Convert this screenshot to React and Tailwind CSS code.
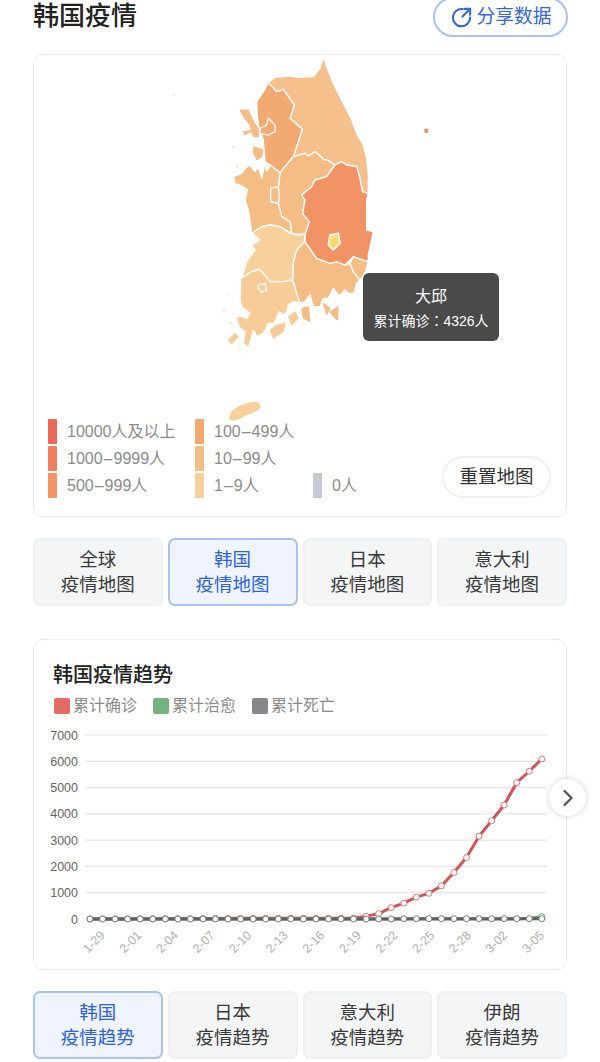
import React from 'react'
import { ChevronRight } from 'lucide-react'

const confirmed = [4, 4, 4, 4, 11, 12, 15, 15, 16, 19, 23, 24, 24, 25, 27, 28, 28, 28, 28, 28, 29, 31, 104, 204, 433, 602, 833, 977, 1261, 1766, 2337, 3150, 3736, 4335, 5186, 5621, 6088]
const cured = confirmed.map((_, i) => (i === 36 ? 90 : i === 35 ? 30 : 0))
const dead = confirmed.map((_, i) => (i > 24 ? 12 : 0))
const xLabels = ['1-29', '2-01', '2-04', '2-07', '2-10', '2-13', '2-16', '2-19', '2-22', '2-25', '2-28', '3-02', '3-05']
const yTicks = [7000, 6000, 5000, 4000, 3000, 2000, 1000, 0]

const px = (i) => 90 + i * 12.55
const py = (v) => 918 - v * (184 / 7000)
const toLine = (arr) => arr.map((v, i) => `${px(i)},${py(v)}`).join(' ')

const regions = [
  // gangwon
  { fill: '#f5c08c', d: 'M370,50 L380,80 L400,130 L420,170 L453,235 L470,280 L490,315 L500,355 L505,400 L505,460 L487,455 L480,415 L470,380 L440,375 L425,365 L405,375 L385,362 L370,358 L358,345 L345,335 L325,348 L315,340 L280,350 L307,268 L270,235 L283,195 L265,170 L250,148 L230,155 L205,128 L225,112 L265,108 L295,112 L340,110 L360,85Z' },
  // gyeonggi
  { fill: '#f2aa72', d: 'M205,128 L230,155 L250,148 L265,170 L283,195 L270,235 L307,268 L280,350 L240,398 L210,375 L195,365 L190,300 L175,255 L172,225 L170,185 L190,155Z' },
  // seoul
  { fill: '#f2aa72', d: 'M205,235 L225,255 L225,275 L205,285 L180,280 L180,265 L200,255Z' },
  // chungbuk
  { fill: '#f5bd86', d: 'M280,350 L315,340 L325,348 L345,335 L358,345 L370,358 L385,362 L405,375 L380,410 L345,420 L335,440 L305,465 L315,480 L308,520 L328,545 L315,585 L275,580 L270,545 L245,530 L235,490 L212,485 L212,445 L235,440 L240,398Z' },
  // chungnam
  { fill: '#f5bd86', d: 'M195,368 L200,395 L210,375 L240,398 L235,440 L212,445 L212,485 L235,490 L245,530 L270,545 L275,580 L240,560 L210,555 L185,560 L155,580 L150,540 L145,510 L135,480 L142,450 L130,440 L105,430 L100,410 L125,400 L135,385 L150,375 L165,395 L175,380 L185,415Z' },
  // daejeon / sejong
  { fill: '#f5bd86', d: 'M212,445 L235,440 L238,470 L235,490 L212,485Z' },
  // jeonbuk
  { fill: '#f8d09c', d: 'M155,580 L185,560 L210,555 L240,560 L270,580 L300,585 L315,580 L315,605 L290,630 L280,670 L278,720 L250,725 L210,725 L180,688 L155,695 L125,715 L140,665 L165,630 L155,615 L180,600Z' },
  // jeonnam
  { fill: '#f7cc97', d: 'M122,715 L155,695 L180,688 L210,725 L250,725 L278,720 L300,790 L282,785 L265,795 L262,815 L250,825 L238,815 L222,850 L205,850 L190,880 L170,890 L160,870 L145,925 L130,910 L135,875 L118,862 L110,840 L110,825 L140,835 L150,820 L125,800 L120,780Z' },
  // gwangju
  { fill: '#f7cc97', d: 'M175,735 L195,730 L200,750 L185,757 L175,745Z' },
  // gyeongnam
  { fill: '#f5bd86', d: 'M315,605 L350,655 L390,670 L410,665 L435,675 L450,670 L460,695 L480,720 L470,730 L462,760 L445,760 L435,750 L418,768 L400,745 L385,775 L370,775 L360,800 L340,800 L330,765 L315,785 L300,790 L278,720 L280,670 L290,630Z' },
  // ulsan / busan
  { fill: '#f5bd86', d: 'M450,670 L460,650 L505,665 L495,700 L480,720 L460,695Z' },
  // gyeongbuk
  { fill: '#f19364', d: 'M405,375 L425,365 L440,375 L470,380 L480,415 L487,455 L505,460 L500,480 L500,570 L520,575 L505,645 L505,665 L460,650 L435,675 L410,665 L390,670 L350,655 L315,605 L315,585 L328,545 L308,520 L315,480 L305,465 L335,440 L345,420 L380,410Z' },
]

const islands = [
  { fill: '#f5bd86', d: 'M120,210 L145,210 L160,245 L175,265 L175,290 L160,290 L150,255 L130,230Z' },
  { fill: '#f5bd86', d: 'M130,275 L160,270 L135,285Z' },
  { fill: '#f5bd86', d: 'M160,320 L190,330 L185,350 L170,360 L160,335Z' },
  { fill: '#f7cc97', d: 'M85,900 L105,880 L115,890 L95,912Z' },
  { fill: '#f7cc97', d: 'M210,870 L230,855 L255,850 L250,875 L220,895Z' },
  { fill: '#f7cc97', d: 'M265,830 L285,815 L295,835 L275,855Z' },
  { fill: '#f5bd86', d: 'M305,805 L325,800 L330,845 L310,835Z' },
  { fill: '#f5bd86', d: 'M370,790 L390,805 L380,825Z' },
  { fill: '#f5bd86', d: 'M390,815 L415,800 L412,840 L400,830Z' },
  { fill: '#ee8a5c', d: 'M674,268 L682,267 L682,277 L676,278Z' },
]

const specks = [[100, 322, 3], [112, 380, 3], [85, 765, 2], [100, 775, 2], [72, 810, 3], [62, 835, 2], [92, 850, 3], [135, 950, 2], [118, 925, 2], [250, 895, 2], [295, 820, 2]]

function KoreaMap() {
  return (
    <svg viewBox="-498 45 1596 1092" className="block w-[532px] h-[364px] overflow-visible">
      <circle cx="-80" cy="165" r="3" fill="#e6e6e6" />
      {islands.map((r, i) => (
        <path key={i} d={r.d} fill={r.fill} stroke={r.fill} strokeWidth="3" strokeLinejoin="round" />
      ))}
      {/* jeju */}
      <path d="M88,1134 C88,1112 110,1100 135,1092 C155,1084 180,1080 181,1098 C182,1114 150,1120 130,1130 C112,1140 92,1148 88,1134Z" fill="#f8d09c" />
      {specks.map(([x, y, r], i) => (
        <circle key={i} cx={x} cy={y} r={r} fill="#f8d9b4" />
      ))}
      {regions.map((r, i) => (
        <path key={i} d={r.d} fill={r.fill} stroke="#fff" strokeWidth="4" strokeLinejoin="round" />
      ))}
      <path d="M390,585 L415,580 L420,610 L400,630 L385,615Z" fill="#fadc6f" stroke="#fff" strokeWidth="5" strokeLinejoin="round" />
    </svg>
  )
}

function LegendItem({ color, from, to }) {
  return (
    <div className="flex items-center gap-[10px] h-[25px]">
      <span className={`block w-[9px] h-full rounded-[1px] ${color}`} />
      <span className="text-[16px] text-[#8b8b8b]">
        {from}
        {to && <span className="mx-[1px]">–</span>}
        {to}
      </span>
    </div>
  )
}

function TabRow({ items }) {
  return (
    <div className="grid grid-cols-4 gap-[5px] mx-[33px]">
      {items.map((t) => (
        <button
          key={t.top}
          className={
            t.active
              ? 'h-[68px] rounded-[7px] border-2 border-[#a9c3f1] bg-[#eff4fe] text-[#2d63d8] text-[18.5px] leading-[25px]'
              : 'h-[68px] rounded-[7px] border-2 border-[#eef0f2] bg-[#f4f5f7] text-[#3a3a3a] text-[18.5px] leading-[25px]'
          }
        >
          <div>{t.top}</div>
          <div>{t.bottom}</div>
        </button>
      ))}
    </div>
  )
}

function TrendChart() {
  return (
    <svg viewBox="34 720 532 240" className="block w-[532px] h-[240px]">
      {yTicks.map((t) => (
        <g key={t}>
          <line x1="85" x2="547" y1={py(t)} y2={py(t)} stroke="#e6e6e6" strokeWidth="1.2" />
          <text x="78" y={py(t) + 4.5} textAnchor="end" fontSize="12.5" fill="#666">{t}</text>
        </g>
      ))}
      {xLabels.map((l, i) => {
        const x = 94 + i * 36.6
        return (
          <text key={l} x={x} y="945" textAnchor="middle" fontSize="12.5" fill="#b0b0b0" transform={`rotate(-45 ${x} 941)`}>{l}</text>
        )
      })}
      <polyline points={toLine(confirmed)} fill="none" stroke="#cf5559" strokeWidth="3" strokeLinejoin="round" />
      {confirmed.map((v, i) => (
        <circle key={i} cx={px(i)} cy={py(v)} r="3" fill="#fff" stroke="#d9777a" strokeWidth="1" />
      ))}
      <polyline points={toLine(cured)} fill="none" stroke="#5fa777" strokeWidth="3" />
      <circle cx={px(36)} cy={py(90)} r="3" fill="#fff" stroke="#5fa777" strokeWidth="1" />
      <polyline points={toLine(dead)} fill="none" stroke="#5f6062" strokeWidth="3" />
      {dead.map((v, i) => (
        <circle key={i} cx={px(i)} cy={py(v)} r="3" fill="#fff" stroke="#77787a" strokeWidth="1" />
      ))}
    </svg>
  )
}

export default function App() {
  return (
    <div className="w-[600px] h-[1062px] overflow-hidden bg-white font-['Liberation_Sans','Noto_Sans_CJK_SC',sans-serif]">
      <div className="flex items-center justify-between h-[40px] mt-[-3px] ml-[33px] mr-[32px]">
        <h1 className="text-[26px] mt-[-2px] font-medium text-[#222222]">韩国疫情</h1>
        <button className="flex items-center justify-center gap-[4px] w-[135px] h-[40px] rounded-full border-2 border-[#a9c3f1] text-[#3568d6] text-[18.75px]">
          <svg width="23" height="23" viewBox="0 0 24 24" fill="none" stroke="currentColor" strokeWidth="2.2" strokeLinecap="round" strokeLinejoin="round">
            <path d="M13 3.2A9 9 0 1 0 21 12" />
            <path d="M15 3h6v6" />
            <path d="M21 3l-8 8" />
          </svg>
          分享数据
        </button>
      </div>

      <div className="relative mt-[17px] mx-[33px] h-[463px] rounded-[10px] border border-[#ebebeb]">
        <KoreaMap />
        <div className="absolute left-[329px] top-[218px] w-[136px] h-[68px] rounded-[6px] bg-[#4a4a4a] text-center text-white">
          <div className="mt-[12px] text-[16px] leading-[24px]">大邱</div>
          <div className="text-[14px] leading-[22px]">
            累计确诊<span className="font-['Noto_Sans_CJK_TC',sans-serif]">：</span>4326人
          </div>
        </div>
        <div className="flex items-end pl-[14px] pr-[15px]">
          <div className="flex flex-col gap-[2px] w-[147px]">
            <LegendItem color="bg-[#ec6a55]" from="10000人及以上" />
            <LegendItem color="bg-[#f07f60]" from="1000" to="9999人" />
            <LegendItem color="bg-[#f19364]" from="500" to="999人" />
          </div>
          <div className="flex flex-col gap-[2px] w-[118px]">
            <LegendItem color="bg-[#f2a96f]" from="100" to="499人" />
            <LegendItem color="bg-[#f5bd86]" from="10" to="99人" />
            <LegendItem color="bg-[#f8d09c]" from="1" to="9人" />
          </div>
          <LegendItem color="bg-[#c5c9d5]" from="0人" />
          <button className="ml-auto w-[109px] h-[42px] rounded-full border-2 border-[#f0f0f0] text-[18.5px] text-[#333333]">重置地图</button>
        </div>
      </div>

      <div className="mt-[21px]">
        <TabRow
          items={[
            { top: '全球', bottom: '疫情地图' },
            { top: '韩国', bottom: '疫情地图', active: true },
            { top: '日本', bottom: '疫情地图' },
            { top: '意大利', bottom: '疫情地图' },
          ]}
        />
      </div>

      <div className="relative mt-[33px] mx-[33px] h-[331px] rounded-[10px] border border-[#ebebeb]">
        <h2 className="ml-[19px] mt-[20px] text-[20px] leading-[30px] font-medium text-[#222222]">韩国疫情趋势</h2>
        <div className="flex items-center ml-[20px] mt-[6px] h-[19px] text-[16px] text-[#8b8b8b]">
          <span className="w-[16px] h-[16px] rounded-[2px] bg-[#e36a66]" />
          <span className="ml-[3px] mr-[16px]">累计确诊</span>
          <span className="w-[16px] h-[16px] rounded-[2px] bg-[#74b37f]" />
          <span className="ml-[3px] mr-[16px]">累计治愈</span>
          <span className="w-[16px] h-[16px] rounded-[2px] bg-[#87878b]" />
          <span className="ml-[3px]">累计死亡</span>
        </div>
        <div className="mt-[6px]">
          <TrendChart />
        </div>
        <button className="absolute right-[-20px] top-[139px] flex items-center justify-center w-[37px] h-[37px] rounded-full bg-white shadow-[0_0_6px_rgba(0,0,0,0.18)]">
          <ChevronRight size={28} strokeWidth={2} className="text-[#555555]" />
        </button>
      </div>

      <div className="mt-[21px]">
        <TabRow
          items={[
            { top: '韩国', bottom: '疫情趋势', active: true },
            { top: '日本', bottom: '疫情趋势' },
            { top: '意大利', bottom: '疫情趋势' },
            { top: '伊朗', bottom: '疫情趋势' },
          ]}
        />
      </div>
    </div>
  )
}
